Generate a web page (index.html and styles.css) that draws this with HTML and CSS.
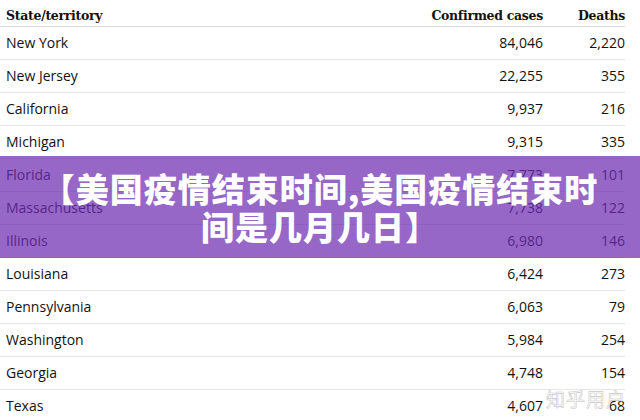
FILE: index.html
```
<!DOCTYPE html>
<html lang="zh">
<head>
<meta charset="utf-8">
<link rel="stylesheet" href="styles.css">
</head>
<body>
<div class="page">
  <table class="cases">
    <thead>
      <tr><th class="state">State/territory</th><th class="num">Confirmed cases</th><th class="num deaths">Deaths</th></tr>
    </thead>
    <tbody>
      <tr><td>New York</td><td class="num">84,046</td><td class="num">2,220</td></tr>
      <tr><td>New Jersey</td><td class="num">22,255</td><td class="num">355</td></tr>
      <tr><td>California</td><td class="num">9,937</td><td class="num">216</td></tr>
      <tr><td>Michigan</td><td class="num">9,315</td><td class="num">335</td></tr>
      <tr><td>Florida</td><td class="num">7,773</td><td class="num">101</td></tr>
      <tr><td>Massachusetts</td><td class="num">7,738</td><td class="num">122</td></tr>
      <tr><td>Illinois</td><td class="num">6,980</td><td class="num">146</td></tr>
      <tr><td>Louisiana</td><td class="num">6,424</td><td class="num">273</td></tr>
      <tr><td>Pennsylvania</td><td class="num">6,063</td><td class="num">79</td></tr>
      <tr><td>Washington</td><td class="num">5,984</td><td class="num">254</td></tr>
      <tr><td>Georgia</td><td class="num">4,748</td><td class="num">154</td></tr>
      <tr><td>Texas</td><td class="num">4,607</td><td class="num">68</td></tr>
    </tbody>
  </table>
  <div class="banner">
    <h1 class="headline">【美国疫情结束时间,美国疫情结束时间是几月几日】</h1>
  </div>
  <div class="watermark">知乎用户</div>
</div>
</body>
</html>
```

FILE: styles.css
```
html, body {
  margin: 0;
  padding: 0;
  background: #ffffff;
}
.page {
  position: relative;
  width: 640px;
  height: 420px;
  overflow: hidden;
}
.cases {
  width: 625px;
  border-collapse: collapse;
  font-family: "Open Sans", "Noto Sans", sans-serif;
  font-size: 14px;
  color: #121212;
}
.cases thead tr {
  height: 26px;
}
.cases th {
  font-family: "DejaVu Serif", "Liberation Serif", serif;
  font-weight: bold;
  font-size: 12.5px;
  line-height: 15px;
  color: #121212;
  padding: 7px 0 3px 6px;
  text-align: left;
  vertical-align: bottom;
  border-bottom: 1px solid #dcdcdc;
  letter-spacing: -0.3px;
}
.cases th.num {
  text-align: right;
  padding-left: 0;
}
.cases th.deaths, .cases td.num:last-child {
  width: 82px;
}
.cases td {
  height: 32px;
  padding: 0 0 0 6px;
  border-bottom: 1px solid #e6e6e6;
  vertical-align: middle;
}
.cases td.num {
  text-align: right;
  padding: 0;
}
.banner {
  position: absolute;
  left: 0;
  top: 156px;
  width: 640px;
  height: 102px;
  background: rgba(110, 45, 178, 0.72);
  display: flex;
  align-items: center;
  justify-content: center;
}
.headline {
  margin: 0;
  width: 566px;
  text-align: center;
  font-family: "Noto Sans CJK SC", sans-serif;
  font-weight: 900;
  font-size: 33px;
  line-height: 38px;
  color: #ffffff;
  letter-spacing: 1px;
}
.watermark {
  position: absolute;
  left: 546px;
  top: 385px;
  font-family: "Noto Sans CJK SC", sans-serif;
  font-size: 19px;
  color: rgba(255, 255, 255, 0.6);
  -webkit-text-stroke: 0.6px rgba(120, 120, 120, 0.45);
  letter-spacing: 1px;
}
```
